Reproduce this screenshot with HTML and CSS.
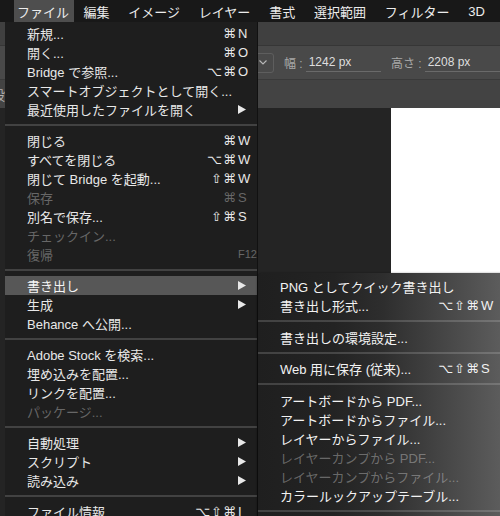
FILE: index.html
```html
<!DOCTYPE html>
<html lang="ja">
<head>
<meta charset="utf-8">
<title>Photoshop ファイル メニュー</title>
<link rel="stylesheet" href="styles.css">
</head>
<body>
<div class="screen">
  <header class="menubar">
    <span class="mb-item first active">ファイル</span>
    <span class="mb-item">編集</span>
    <span class="mb-item">イメージ</span>
    <span class="mb-item">レイヤー</span>
    <span class="mb-item">書式</span>
    <span class="mb-item">選択範囲</span>
    <span class="mb-item">フィルター</span>
    <span class="mb-item">3D</span>
  </header>

  <div class="workspace">
    <div class="bar bar-top"></div>
    <div class="bar bar-options">
      <div class="preset">
        <svg class="chev" width="8" height="5" viewBox="0 0 8 5"><polyline points="0.5,0.5 4,4 7.5,0.5" fill="none" stroke="#b8b8b8" stroke-width="1.1"/></svg>
      </div>
      <span class="opt-label">幅 :</span>
      <span class="opt-field w">1242 px</span>
      <span class="opt-label">高さ :</span>
      <span class="opt-field h">2208 px</span>
    </div>
    <div class="bar bar-third"><span class="side-label">設</span></div>
    <div class="canvas-area">
      <div class="pasteboard"></div>
      <div class="document"></div>
    </div>
  </div>

  <div class="menu main-menu">
    <div class="item"><span class="label">新規...</span><span class="mods">⌘</span><span class="key">N</span></div>
    <div class="item"><span class="label">開く...</span><span class="mods">⌘</span><span class="key">O</span></div>
    <div class="item"><span class="label">Bridge で参照...</span><span class="mods">⌥⌘</span><span class="key">O</span></div>
    <div class="item"><span class="label">スマートオブジェクトとして開く...</span></div>
    <div class="item"><span class="label">最近使用したファイルを開く</span><span class="key"><svg class="arrow" width="8" height="9" viewBox="0 0 8 9"><polygon points="0,0 8,4.5 0,9"/></svg></span></div>
    <div class="sep"></div>
    <div class="item"><span class="label">閉じる</span><span class="mods">⌘</span><span class="key">W</span></div>
    <div class="item"><span class="label">すべてを閉じる</span><span class="mods">⌥⌘</span><span class="key">W</span></div>
    <div class="item"><span class="label">閉じて Bridge を起動...</span><span class="mods">⇧⌘</span><span class="key">W</span></div>
    <div class="item disabled"><span class="label">保存</span><span class="mods">⌘</span><span class="key">S</span></div>
    <div class="item"><span class="label">別名で保存...</span><span class="mods">⇧⌘</span><span class="key">S</span></div>
    <div class="item disabled"><span class="label">チェックイン...</span></div>
    <div class="item disabled"><span class="label">復帰</span><span class="key fkey">F12</span></div>
    <div class="sep"></div>
    <div class="item selected"><span class="label">書き出し</span><span class="key"><svg class="arrow" width="8" height="9" viewBox="0 0 8 9"><polygon points="0,0 8,4.5 0,9"/></svg></span></div>
    <div class="item"><span class="label">生成</span><span class="key"><svg class="arrow" width="8" height="9" viewBox="0 0 8 9"><polygon points="0,0 8,4.5 0,9"/></svg></span></div>
    <div class="item"><span class="label">Behance へ公開...</span></div>
    <div class="sep"></div>
    <div class="item"><span class="label">Adobe Stock を検索...</span></div>
    <div class="item"><span class="label">埋め込みを配置...</span></div>
    <div class="item"><span class="label">リンクを配置...</span></div>
    <div class="item disabled"><span class="label">パッケージ...</span></div>
    <div class="sep"></div>
    <div class="item"><span class="label">自動処理</span><span class="key"><svg class="arrow" width="8" height="9" viewBox="0 0 8 9"><polygon points="0,0 8,4.5 0,9"/></svg></span></div>
    <div class="item"><span class="label">スクリプト</span><span class="key"><svg class="arrow" width="8" height="9" viewBox="0 0 8 9"><polygon points="0,0 8,4.5 0,9"/></svg></span></div>
    <div class="item"><span class="label">読み込み</span><span class="key"><svg class="arrow" width="8" height="9" viewBox="0 0 8 9"><polygon points="0,0 8,4.5 0,9"/></svg></span></div>
    <div class="sep"></div>
    <div class="item"><span class="label">ファイル情報</span><span class="mods">⌥⇧⌘</span><span class="key">I</span></div>
  </div>

  <div class="menu submenu">
    <div class="item"><span class="label">PNG としてクイック書き出し</span></div>
    <div class="item"><span class="label">書き出し形式...</span><span class="mods">⌥⇧⌘</span><span class="key">W</span></div>
    <div class="sep"></div>
    <div class="item"><span class="label">書き出しの環境設定...</span></div>
    <div class="sep"></div>
    <div class="item"><span class="label">Web 用に保存 (従来)...</span><span class="mods">⌥⇧⌘</span><span class="key">S</span></div>
    <div class="sep"></div>
    <div class="item"><span class="label">アートボードから PDF...</span></div>
    <div class="item"><span class="label">アートボードからファイル...</span></div>
    <div class="item"><span class="label">レイヤーからファイル...</span></div>
    <div class="item disabled"><span class="label">レイヤーカンプから PDF...</span></div>
    <div class="item disabled"><span class="label">レイヤーカンプからファイル...</span></div>
    <div class="item"><span class="label">カラールックアップテーブル...</span></div>
    <div class="sep"></div>
  </div>
</div>
</body>
</html>
```

FILE: styles.css
```css
html, body {
  margin: 0;
  padding: 0;
  background: #262626;
}

body {
  width: 500px;
  height: 516px;
  overflow: hidden;
  font-family: "Liberation Sans", "Noto Sans CJK JP", sans-serif;
  font-size: 13px;
  color: #e8e8e8;
}

.screen {
  position: relative;
  width: 500px;
  height: 516px;
  overflow: hidden;
}

/* ---------- menu bar ---------- */
.menubar {
  display: flex;
  align-items: stretch;
  height: 22px;
  padding-left: 14px;
  background: #181818;
}

.mb-item {
  display: flex;
  align-items: center;
  padding: 0 9.4px;
  font-size: 13px;
  color: #ececec;
  white-space: nowrap;
}

.mb-item.first {
  padding-left: 3px;
  padding-right: 5px;
}

.mb-item.active {
  background: #4e4e4e;
}

/* ---------- workspace behind menus ---------- */
.workspace {
  display: flex;
  flex-direction: column;
}

.bar {
  display: flex;
  align-items: center;
}

.bar-top {
  height: 23px;
  background: #404040;
  border-bottom: 1px solid #363636;
}

.bar-options {
  height: 33px;
  background: #494949;
  border-bottom: 1px solid #3a3a3a;
  padding-left: 161px;
}

.preset {
  width: 120px;
  height: 20px;
  box-sizing: border-box;
  border: 1px solid #5e5e5e;
  border-radius: 3px;
  display: flex;
  align-items: center;
  justify-content: flex-end;
  padding-right: 6px;
}

.opt-label {
  margin-left: 10px;
  color: #a8a8a8;
  font-size: 12px;
  white-space: nowrap;
}

.opt-field {
  margin-left: 3px;
  padding: 2px 3px;
  box-sizing: border-box;
  border-bottom: 1px solid #6a6a6a;
  color: #dedede;
  font-size: 12px;
  white-space: nowrap;
}

.opt-field.w {
  width: 80px;
}

.opt-field.h {
  width: 80px;
}

.bar-third {
  height: 28px;
  background: #434343;
}

.side-label {
  margin-left: -8px;
  color: #b0b0b0;
  font-size: 13px;
}

.canvas-area {
  display: flex;
  height: 420px;
}

.pasteboard {
  width: 391px;
  background: #242424;
}

.document {
  flex: 1;
  background: #ffffff;
}

/* ---------- menus ---------- */
.menu {
  position: absolute;
  box-sizing: border-box;
}

.main-menu {
  left: 5px;
  top: 22px;
  width: 253px;
  height: 520px;
  padding-top: 1.5px;
  background: #1e1e1e;
  border-right: 1px solid #111111;
}

.submenu {
  left: 258px;
  top: 273px;
  width: 252px;
  height: 260px;
  padding-top: 4px;
  border-radius: 5px 0 0 0;
  background: linear-gradient(to right, #1f1f1f 0%, #232323 30%, #2e2e2e 50%, #444444 72%, #5c5c5c 96%);
  box-shadow: -1px 0 2px rgba(0, 0, 0, 0.4);
}

.item {
  display: flex;
  align-items: center;
  height: 19px;
  padding-left: 22px;
  white-space: nowrap;
  color: #e8e8e8;
}

.submenu .item {
  color: #f2f2f2;
}

.item .label {
  flex: 1;
}

.item .mods {
  font-family: "DejaVu Sans", sans-serif;
  font-size: 13px;
  letter-spacing: 1px;
  text-align: right;
}

.item .key {
  width: 20px;
  padding-left: 1px;
  box-sizing: border-box;
  display: flex;
  align-items: center;
}

.submenu .item .key {
  width: 30px;
}

.item .fkey {
  font-size: 11px;
}

.arrow {
  fill: #e8e8e8;
}

.item.disabled {
  color: #676767;
}

.submenu .item.disabled {
  color: rgba(255, 255, 255, 0.33);
}

.item.selected {
  background: #575757;
  color: #f4f4f4;
}

.sep {
  height: 2px;
  margin: 5.1px 0;
  background: #424242;
}

.submenu .sep {
  margin: 5.25px 0;
  background: rgba(255, 255, 255, 0.16);
}
```
